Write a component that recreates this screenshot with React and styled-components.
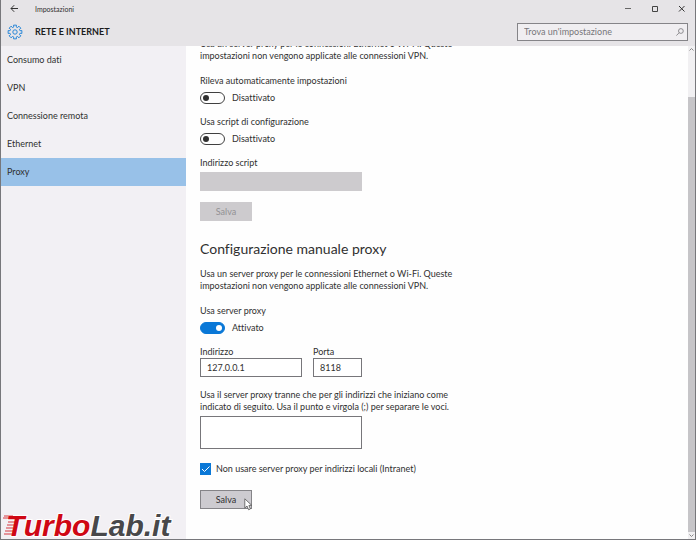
import React, { useState } from "react";
import styled, { createGlobalStyle, css } from "styled-components";

const GlobalStyle = createGlobalStyle`
  *, *::before, *::after { box-sizing: border-box; }
  body {
    margin: 0;
    background: #fefefe;
    color: #303030;
    font: 9px/12px Lato, "Open Sans", sans-serif;
    font-variant-ligatures: none;
  }
  button, input, textarea { font: inherit; color: inherit; margin: 0; border-radius: 0; }
  h1, h2, p, ul { margin: 0; padding: 0; }
`;

const Window = styled.div`
  display: flex;
  flex-direction: column;
  height: 100vh;
  border: solid #77777b;
  border-width: 0 1px 1px;
  overflow: hidden;
`;

const Top = styled.header`
  flex: none;
  background: #e6e4e7;
`;

const TitleBar = styled.div`
  display: flex;
  align-items: center;
  height: 17px;
`;

const IconButton = styled.button`
  display: grid;
  place-items: center;
  width: 27px;
  height: 17px;
  padding: 0;
  border: 0;
  background: none;
`;

const AppName = styled.span`
  flex: 1;
  padding-left: 7px;
  font-size: 7px;
`;

const SectionBar = styled.div`
  display: flex;
  align-items: center;
  height: 29px;
  padding: 0 7px 0 6px;
`;

const SectionTitle = styled.h1`
  flex: 1;
  padding-left: 12px;
  font-size: 9px;
  font-weight: 700;
  line-height: 12px;
  color: #1c1c1c;
`;

const Search = styled.label`
  display: flex;
  align-items: center;
  width: 171px;
  height: 18px;
  padding: 0 3px 0 6px;
  border: 1px solid #858488;
  background: #f0eef1;
`;

const SearchInput = styled.input`
  flex: 1;
  min-width: 0;
  padding: 0;
  border: 0;
  outline: 0;
  background: none;
  &::placeholder { color: #77767a; opacity: 1; }
`;

const Body = styled.div`
  display: flex;
  flex: 1;
  min-height: 0;
`;

const Sidebar = styled.nav`
  display: flex;
  flex-direction: column;
  flex: none;
  width: 185px;
  background: #f2f0f4;
`;

const NavList = styled.ul`
  list-style: none;
`;

const NavLink = styled.a`
  display: flex;
  align-items: center;
  height: 28px;
  padding-left: 6px;
  color: inherit;
  text-decoration: none;
  background: ${(p) => (p.$active ? "#98c1e8" : "transparent")};
`;

const Brand = styled.div`
  display: flex;
  margin-top: auto;
  svg { overflow: visible; }
`;

const Content = styled.main`
  flex: 1;
  min-width: 0;
  padding-left: 14px;
  overflow: hidden;
`;

const Intro = styled.p`
  max-width: 270px;
  margin-top: ${(p) => (p.$scrolled ? "-8px" : "0")};
  padding-bottom: 1px;
`;

const Heading = styled.h2`
  margin: 18px 0 9px;
  font-size: 14px;
  font-weight: 400;
  line-height: 20px;
`;

const Setting = styled.div`
  display: flex;
  flex-direction: column;
  align-items: flex-start;
  gap: ${(p) => p.$gap ?? 4}px;
  margin-top: 12px;
`;

const FieldRow = styled.div`
  display: flex;
  gap: 11px;
`;

const Switch = styled.label`
  display: flex;
  align-items: center;
  gap: 7px;
  height: 13px;
`;

const SwitchInput = styled.input`
  appearance: none;
  display: flex;
  align-items: center;
  width: 25px;
  height: 12px;
  margin: 0;
  padding: 0 2px;
  border: 1px solid #404040;
  border-radius: 6px;
  &::before {
    content: "";
    width: 6px;
    height: 6px;
    border-radius: 50%;
    background: #303030;
  }
  &:checked {
    justify-content: flex-end;
    border-color: #0a78d7;
    background: #0a78d7;
  }
  &:checked::before { background: #fff; }
`;

const fieldStyle = css`
  display: block;
  width: ${(p) => p.$width}px;
  border: 1px solid #77767a;
  background: #fff;
  &:disabled { border-color: #cdcbce; background: #cdcbce; }
`;

const TextField = styled.input`
  ${fieldStyle}
  height: 19px;
  padding: 0 6px;
`;

const TextArea = styled.textarea`
  ${fieldStyle}
  height: 33px;
  padding: 2px 6px;
  resize: none;
`;

const Check = styled.label`
  display: flex;
  align-items: center;
  gap: 5px;
  height: 12px;
  margin-top: 14px;
`;

const CheckBox = styled.span`
  position: relative;
  display: grid;
  width: 11px;
  height: 12px;
  svg { position: absolute; inset: 0; pointer-events: none; }
`;

const CheckInput = styled.input`
  appearance: none;
  width: 11px;
  height: 12px;
  border: 1px solid #0a78d7;
  background: #fff;
  &:checked { background: #0a78d7; }
  &:not(:checked) + svg { display: none; }
`;

const ButtonSlot = styled.div`
  position: relative;
  width: 52px;
  margin-top: ${(p) => p.$top}px;
`;

const Button = styled.button`
  display: block;
  width: 100%;
  height: 19px;
  padding: 0;
  border: 1px solid #858488;
  background: #cdcbd0;
  &:disabled { border-color: #cdcbce; background: #cdcbce; color: #929194; }
`;

const Pointer = styled.svg`
  position: absolute;
  left: 44px;
  top: 8px;
`;

const Scrollbar = styled.div`
  display: flex;
  flex-direction: column;
  align-items: center;
  flex: none;
  width: 7px;
  background: #f1f0f2;
`;

const ScrollArrow = styled.svg`
  flex: none;
  margin: 1px 0;
`;

const Thumb = styled.div`
  flex: 1;
  width: 100%;
  margin-top: 44px;
  background: #c6c5c8;
`;

const gear = Array.from({ length: 8 }, (_, i) => {
  const at = (r, deg) => {
    const a = ((i * 45 + deg) * Math.PI) / 180;
    return `${(8 + r * Math.sin(a)).toFixed(2)} ${(8 - r * Math.cos(a)).toFixed(2)}`;
  };
  return `${i ? "L" : "M"}${at(5.2, -14)}L${at(7, -12)}L${at(7, 12)}L${at(5.2, 14)}L${at(4.9, 22)}`;
}).join("");

function Toggle({ label, initial = false }) {
  const [on, setOn] = useState(initial);
  return (
    <Setting>
      <span>{label}</span>
      <Switch>
        <SwitchInput type="checkbox" role="switch" aria-label={label} checked={on} onChange={() => setOn(!on)} />
        {on ? "Attivato" : "Disattivato"}
      </Switch>
    </Setting>
  );
}

function Field({ id, label, gap, ...rest }) {
  return (
    <Setting $gap={gap}>
      <label htmlFor={id}>{label}</label>
      <TextField id={id} {...rest} />
    </Setting>
  );
}

function ProxyNote({ scrolled }) {
  return (
    <Intro $scrolled={scrolled}>
      Usa un server proxy per le connessioni Ethernet o Wi-Fi. Queste<br />
      impostazioni non vengono applicate alle connessioni VPN.
    </Intro>
  );
}

const sections = ["Consumo dati", "VPN", "Connessione remota", "Ethernet", "Proxy"];

export default function App() {
  return (
    <Window>
      <GlobalStyle />
      <Top>
        <TitleBar>
          <IconButton aria-label="Indietro">
            <svg width="9" height="9" viewBox="0 0 9 9" fill="none" stroke="#333">
              <path d="M8 4.5H1M4.2 1.2L1 4.5L4.2 7.8" />
            </svg>
          </IconButton>
          <AppName>Impostazioni</AppName>
          <IconButton aria-label="Riduci a icona">
            <svg width="7" height="7" stroke="#666"><path d="M1 3.5H7" /></svg>
          </IconButton>
          <IconButton aria-label="Ingrandisci">
            <svg width="7" height="7" fill="none" stroke="#444"><path d="M1.5 1.5H6.5V6.5H1.5Z" /></svg>
          </IconButton>
          <IconButton aria-label="Chiudi">
            <svg width="7" height="7" stroke="#333"><path d="M1 1L6.5 6.5M6.5 1L1 6.5" /></svg>
          </IconButton>
        </TitleBar>
        <SectionBar>
          <svg width="16" height="16" viewBox="0 0 16 16" fill="none" stroke="#2b88d8" strokeLinejoin="round" aria-hidden="true">
            <path d={gear + "Z"} />
            <circle cx="8" cy="8" r="2.2" />
          </svg>
          <SectionTitle>RETE E INTERNET</SectionTitle>
          <Search>
            <SearchInput type="search" aria-label="Trova un'impostazione" placeholder="Trova un'impostazione" />
            <svg width="8" height="8" viewBox="0 0 8 8" fill="none" stroke="#77767a" strokeWidth="0.8" aria-hidden="true">
              <circle cx="4.9" cy="3" r="2.4" />
              <path d="M3.2 4.7L.4 7.6" />
            </svg>
          </Search>
        </SectionBar>
      </Top>
      <Body>
        <Sidebar>
          <NavList>
            {sections.map((name) => (
              <li key={name}>
                <NavLink href="#" $active={name === "Proxy"}>{name}</NavLink>
              </li>
            ))}
          </NavList>
          <Brand>
            <svg width="180" height="28" role="img" aria-label="TurboLab.it">
              <text
                x="5" y="25" fontFamily="Liberation Sans, sans-serif" fontSize="30" fontWeight="700" fontStyle="italic"
                stroke="#fff" strokeWidth="2" paintOrder="stroke"
              >
                <tspan fill="#cf0714">Turbo</tspan><tspan fill="#48484a">Lab.it</tspan>
              </text>
              <path d="M3 5H12M2 7H11M7 11H14M6 14H13M5 17H12M4 20H12M3 23H11" stroke="#cf0714" strokeWidth="0.8" />
            </svg>
          </Brand>
        </Sidebar>
        <Content>
          <ProxyNote scrolled />
          <Toggle label="Rileva automaticamente impostazioni" />
          <Toggle label="Usa script di configurazione" />
          <Field id="script" label="Indirizzo script" gap={3} $width={162} disabled />
          <ButtonSlot $top={11}>
            <Button disabled>Salva</Button>
          </ButtonSlot>
          <Heading>Configurazione manuale proxy</Heading>
          <ProxyNote />
          <Toggle label="Usa server proxy" initial />
          <FieldRow>
            <Field id="address" label="Indirizzo" gap={0} $width={102} defaultValue="127.0.0.1" />
            <Field id="port" label="Porta" gap={0} $width={49} defaultValue="8118" />
          </FieldRow>
          <Setting $gap={3}>
            <label htmlFor="exceptions">
              Usa il server proxy tranne che per gli indirizzi che iniziano come<br />
              indicato di seguito. Usa il punto e virgola (;) per separare le voci.
            </label>
            <TextArea id="exceptions" $width={162} />
          </Setting>
          <Check>
            <CheckBox>
              <CheckInput type="checkbox" defaultChecked />
              <svg width="11" height="12" fill="none" stroke="#fff"><path d="M2 6L4.5 8.5L9.5 3.5" /></svg>
            </CheckBox>
            Non usare server proxy per indirizzi locali (Intranet)
          </Check>
          <ButtonSlot $top={15}>
            <Button>Salva</Button>
            <Pointer width="9" height="13" viewBox="0 0 9 13" aria-hidden="true">
              <path d="M.8 .8V10L3 8L4.6 11.8L6.4 11L4.9 7.4H7.8Z" fill="#fff" stroke="#555" strokeWidth="0.8" />
            </Pointer>
          </ButtonSlot>
        </Content>
        <Scrollbar aria-hidden="true">
          <ScrollArrow width="5" height="5" fill="none" stroke="#888"><path d="M.5 3.5L2.5 1.5L4.5 3.5" /></ScrollArrow>
          <Thumb />
          <ScrollArrow width="5" height="5" fill="none" stroke="#888"><path d="M.5 1.5L2.5 3.5L4.5 1.5" /></ScrollArrow>
        </Scrollbar>
      </Body>
    </Window>
  );
}
